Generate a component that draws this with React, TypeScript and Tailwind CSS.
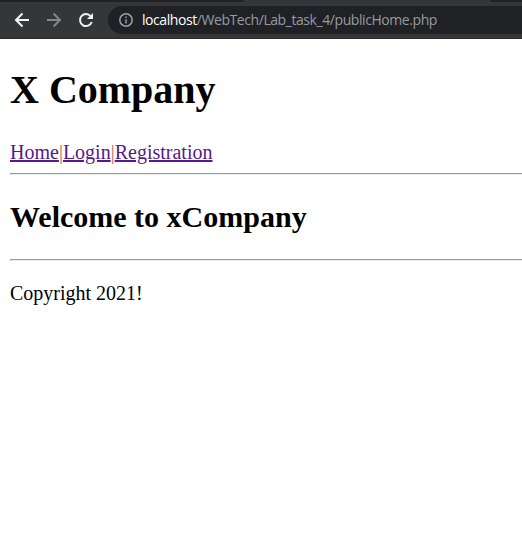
function Toolbar() {
  return (
    <header className="h-[39px] overflow-hidden border-b border-[#2b292c] bg-[#35363a] font-['Open_Sans','Noto_Sans',sans-serif]">
      <div className="flex h-[2px] justify-between">
        <div className="w-[244px] rounded-br-[3px] bg-[#202124]" />
        <div className="w-8 rounded-bl-[3px] bg-[#202124]" />
      </div>
      <div className="flex pt-1">
        <div className="flex h-7 w-[108px] shrink-0 items-center pl-3">
          <svg className="mr-3 h-5 w-5" viewBox="0 0 20 20" fill="none" stroke="#f1f3f4" strokeWidth="2">
            <path d="M17 10H4.500M10.500 3.500L4 10l6.500 6.500" />
          </svg>
          <svg className="mr-3 h-5 w-5" viewBox="0 0 20 20" fill="none" stroke="#85868a" strokeWidth="2">
            <path d="M3 10h12.500M9.500 3.500L16 10l-6.500 6.500" />
          </svg>
          <svg className="h-5 w-5" viewBox="0 0 20 20">
            <path d="M14.700 6.300A6 6 0 1 0 15.700 12" fill="none" stroke="#f1f3f4" strokeWidth="2" />
            <path d="M17 3v6h-6z" fill="#f1f3f4" />
          </svg>
        </div>
        <div className="flex h-7 flex-1 items-center rounded-l-full bg-[#202124] pl-2.5">
          <svg className="h-4 w-4 shrink-0" viewBox="0 0 16 16" fill="none" stroke="#9aa0a6" strokeWidth="1.500">
            <circle cx="8" cy="8" r="6.200" />
            <path d="M8 7.200v4.200M8 4.500v1.500" />
          </svg>
          <span className="ml-2 whitespace-nowrap text-[14px] leading-5 tracking-[-0.43px] text-[#969ba1]">
            <span className="text-white">localhost</span>/WebTech/Lab_task_4/publicHome.php
          </span>
        </div>
      </div>
    </header>
  );
}

export default function App() {
  return (
    <div className="h-[553px] overflow-hidden bg-white font-['Liberation_Serif',serif] text-xl text-black">
      <Toolbar />
      <main className="pl-2.5">
        <h1 className="pt-[28px] text-[40px] font-bold leading-[46px]">X Company</h1>
        <nav className="mt-[28px] flex leading-[23px] text-[#551a8b]">
          <a href="#home" className="underline decoration-2 underline-offset-1">Home</a>
          <span className="text-[#c9605c]">|</span>
          <a href="#login" className="underline decoration-2 underline-offset-1">Login</a>
          <span className="text-[#c9605c]">|</span>
          <a href="#registration" className="underline decoration-2 underline-offset-1">Registration</a>
        </nav>
        <hr className="mt-[9px] h-[2px] border-t border-b border-l border-t-[#9a9a9a] border-b-[#eeeeee] border-l-[#9a9a9a]" />
        <h2 className="mt-[25px] text-[30px] font-bold leading-[34px]">Welcome to xCompany</h2>
        <hr className="mt-[25px] h-[2px] border-t border-b border-l border-t-[#9a9a9a] border-b-[#eeeeee] border-l-[#9a9a9a]" />
        <p className="mt-[21px] leading-[23px]">Copyright 2021!</p>
      </main>
    </div>
  );
}
